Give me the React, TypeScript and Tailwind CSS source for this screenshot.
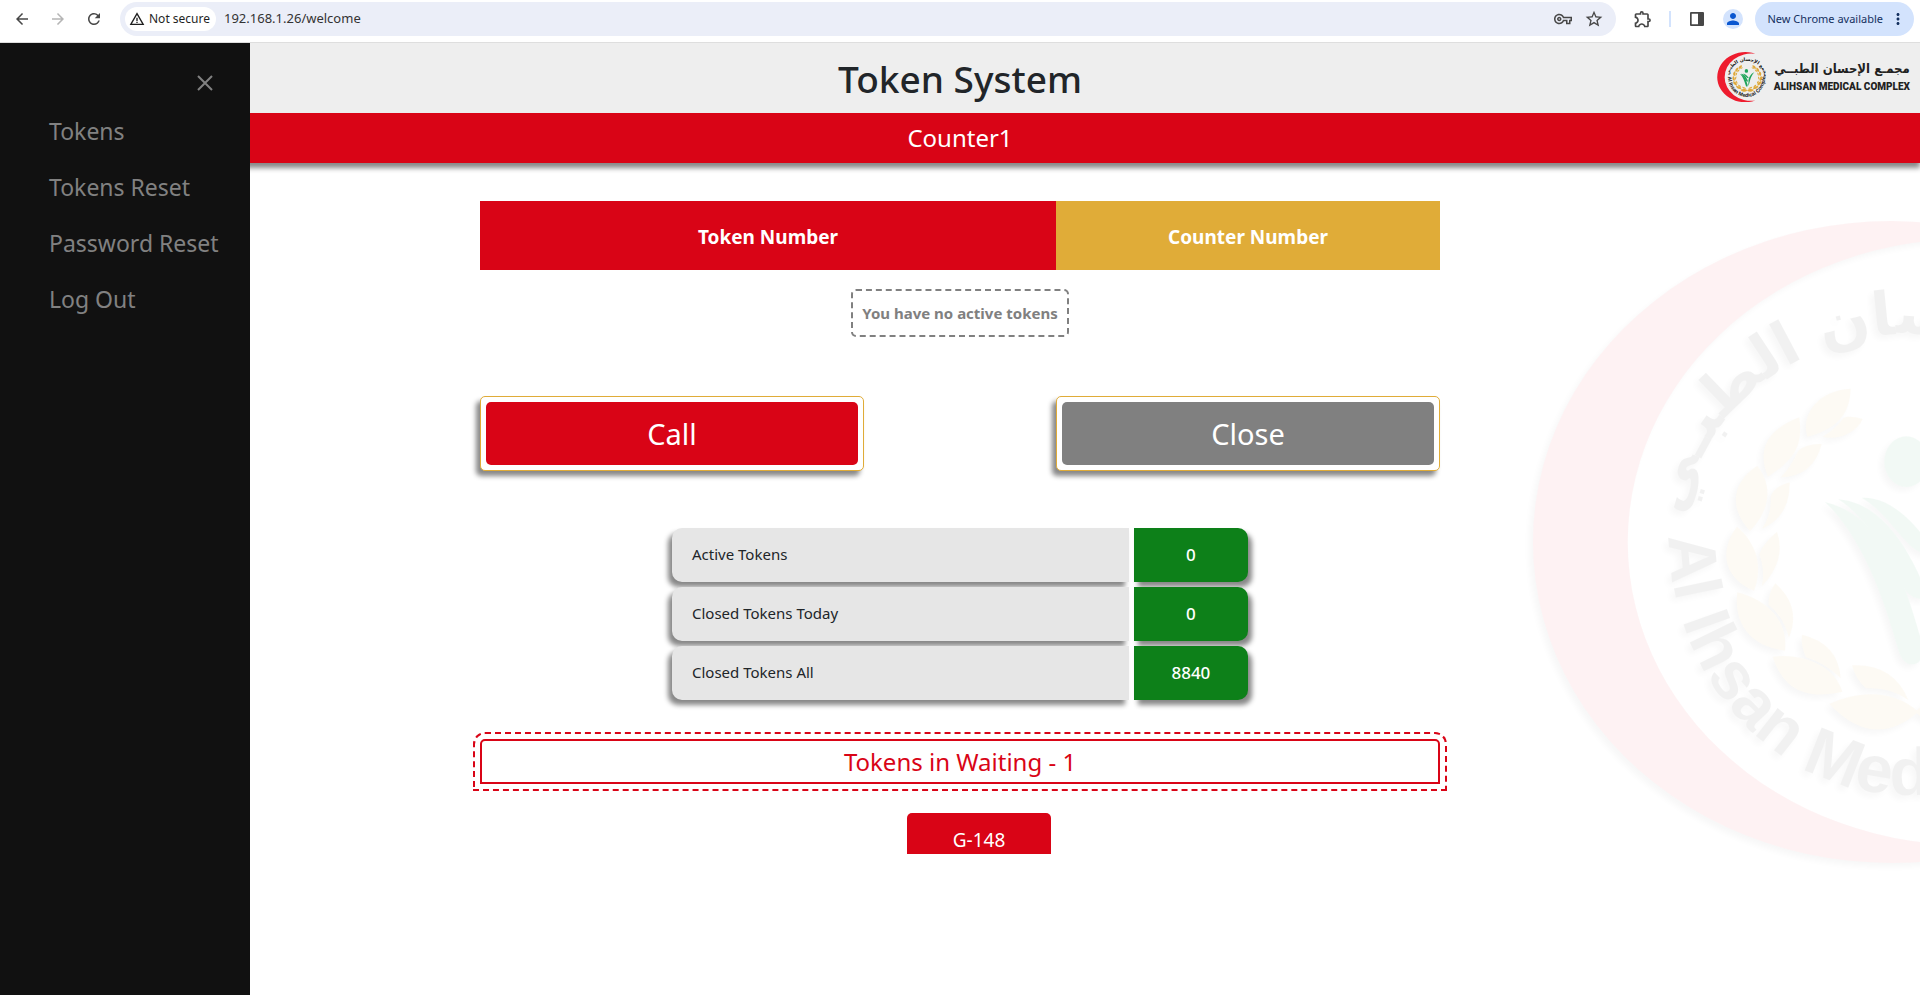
import React from "react";
import {
  MdArrowBack,
  MdArrowForward,
  MdRefresh,
  MdOutlineVpnKey,
  MdStarBorder,
  MdOutlineExtension,
  MdPerson,
  MdMoreVert,
  MdWarningAmber,
} from "react-icons/md";

const leaves = [
  "M1052 566C960 570 900 640 922 710C1000 690 1050 650 1052 566Z",
  "M1088 657C1060 650 1045 648 1030 654C1015 675 1000 690 968 710C1010 722 1070 700 1088 657Z",
  "M898 652C800 690 770 750 804 830C880 780 910 740 898 652Z",
  "M965 732Q920 730 895 752Q870 805 842 832Q940 830 965 732Z",
  "M772 797C690 850 690 930 750 993C810 930 820 860 772 797Z",
  "M869 847Q820 860 812 892Q815 945 786 986Q870 950 869 847Z",
  "M711 980C650 1060 680 1140 762 1172C790 1100 770 1030 711 980Z",
  "M831 995Q790 1030 778 1062Q795 1110 786 1158Q860 1080 831 995Z",
  "M712 1177C700 1270 750 1340 855 1352C865 1260 800 1200 712 1177Z",
  "M826 1150Q804 1180 806 1214Q850 1250 867 1312Q905 1220 826 1150Z",
  "M818 1370C850 1470 920 1500 1027 1475C1000 1390 900 1360 818 1370Z",
  "M906 1304Q902 1340 918 1372Q975 1390 1022 1434Q1015 1330 906 1304Z",
  "M988 1512C1080 1610 1170 1610 1255 1535C1180 1470 1080 1470 988 1512Z",
  "M1056 1396Q1068 1440 1098 1465Q1170 1460 1225 1500Q1180 1390 1056 1396Z",
];

function Wheat() {
  return (
    <g fill="#dfa93a">
      {leaves.map((d) => (
        <path key={d} d={d} />
      ))}
    </g>
  );
}

function Emblem({ id, className }: { id: string; className: string }) {
  return (
    <svg viewBox="0 0 640 644" className={className} aria-hidden="true">
      <defs>
        <path id={`${id}-lower`} d="M139 316A240 259 0 0 0 619 316" />
        <path id={`${id}-upper`} d="M153 320A226 206 0 0 1 605 320" />
      </defs>
      <path
        fill="#ee1c2e"
        d="M490 22.6A358 321 0 1 0 490 621.4A340 303 0 1 1 490 22.6Z"
      />
      <g transform="translate(-30 -20) scale(0.33333)">
        <Wheat />
        <g transform="translate(2500 0) scale(-1 1)">
          <Wheat />
        </g>
        <g fill="#1fa35a">
          <ellipse cx="1219" cy="785" rx="66" ry="76" />
          <path d="M975 906C1085 1010 1150 1190 1195 1350Q1210 1400 1245 1392Q1275 1385 1264 1320C1210 1130 1150 950 975 906Z" />
          <path d="M1015 898C1110 960 1150 1060 1215 1170Q1250 1210 1285 1190C1230 1050 1150 910 1015 898Z" />
          <path d="M1085 893C1150 930 1190 1000 1235 1040Q1270 1070 1310 1060C1240 960 1170 890 1085 893Z" />
          <path d="M1520 840C1380 900 1290 1060 1300 1200Q1290 1330 1285 1370C1370 1230 1340 1050 1520 840Z" />
        </g>
      </g>
      <g fill="#111" fontWeight="700">
        <text fontSize="67" fontFamily="Liberation Sans, Arial, sans-serif">
          <textPath href={`#${id}-lower`}>Al Ihsan Medical Complex</textPath>
        </text>
        <text fontSize="60" fontFamily="DejaVu Sans, sans-serif">
          <textPath href={`#${id}-upper`} startOffset="24">
            مجمع الإحسان الطبـي
          </textPath>
        </text>
      </g>
    </svg>
  );
}

function BrowserBar() {
  return (
    <div className="flex h-[43px] shrink-0 items-start border-b border-[#dedede] bg-white pt-0.5 text-[#474747]">
      <div className="flex h-[34px] w-[120px] items-center gap-[18px] pl-[13px]">
        <button aria-label="Back">
          <MdArrowBack size={18} />
        </button>
        <button aria-label="Forward" className="text-[#b5b5b5]">
          <MdArrowForward size={18} />
        </button>
        <button aria-label="Reload">
          <MdRefresh size={18} />
        </button>
      </div>
      <div className="flex h-[34px] flex-1 items-center rounded-full bg-[#ebeef8] pr-3 pl-[5px]">
        <button className="flex h-6 w-[91px] items-center gap-1 rounded-full bg-white pl-1 text-[12px] whitespace-nowrap text-[#1f1f1f]">
          <MdWarningAmber size={16} />
          Not secure
        </button>
        <input
          aria-label="Address"
          defaultValue="192.168.1.26/welcome"
          className="ml-2 min-w-0 flex-1 bg-transparent text-[13px] text-[#333] outline-none"
        />
        <button aria-label="Saved passwords">
          <MdOutlineVpnKey size={18} />
        </button>
        <button aria-label="Bookmark" className="ml-3">
          <MdStarBorder size={20} />
        </button>
      </div>
      <div className="flex h-[34px] items-center pr-1.5 pl-[17px]">
        <button aria-label="Extensions">
          <MdOutlineExtension size={20} />
        </button>
        <span className="ml-4 h-4 w-0.5 bg-[#d3e3fd]" />
        <button aria-label="Side panel" className="ml-[18px]">
          <svg viewBox="0 0 16 16" className="size-4">
            <path
              fill="currentColor"
              fillRule="evenodd"
              d="M2 1h12a1 1 0 0 1 1 1v12a1 1 0 0 1-1 1H2a1 1 0 0 1-1-1V2a1 1 0 0 1 1-1Zm.7 1.7v10.6H9V2.7Z"
            />
          </svg>
        </button>
        <button
          aria-label="Profile"
          className="ml-[18px] flex size-5 items-center justify-center rounded-full bg-[#d3e3fd] text-[#0b57d0]"
        >
          <MdPerson size={18} />
        </button>
        <button className="ml-3 flex h-[34px] items-center gap-1.5 rounded-full bg-[#d3e3fd] pr-[7px] pl-3 text-[11px] whitespace-nowrap text-[#14305f]">
          New Chrome available
          <MdMoreVert size={18} />
        </button>
      </div>
    </div>
  );
}

const menu = ["Tokens", "Tokens Reset", "Password Reset", "Log Out"];

function Sidebar() {
  return (
    <nav className="absolute inset-y-0 left-0 z-10 w-[250px] bg-[#111] text-[#818181]">
      <div className="flex justify-end pt-5 pr-[25px]">
        <button aria-label="Close menu" className="flex size-10 items-center justify-center">
          <svg viewBox="0 0 16 16" className="size-4" stroke="currentColor" strokeWidth="2">
            <path d="M1 1L15 15M15 1L1 15" />
          </svg>
        </button>
      </div>
      <ul>
        {menu.map((m) => (
          <li key={m}>
            <a href="#" className="flex h-14 items-center pl-[49px] text-[23px] whitespace-nowrap">
              {m}
            </a>
          </li>
        ))}
      </ul>
    </nav>
  );
}

const stats = [
  { label: "Active Tokens", value: "0" },
  { label: "Closed Tokens Today", value: "0" },
  { label: "Closed Tokens All", value: "8840" },
];

export default function App() {
  return (
    <div className="flex min-h-screen flex-col bg-white font-['Noto_Sans',sans-serif] text-[#212529]">
      <BrowserBar />
      <div className="relative flex-1 overflow-hidden">
        <Sidebar />
        <div className="pointer-events-none absolute top-[177px] -right-[250px] opacity-5">
          <Emblem id="mark" className="w-[640px] drop-shadow-[-4px_4px_3px_rgba(0,0,0,0.6)]" />
        </div>
        <header>
          <div className="grid h-[70px] grid-cols-[1fr_auto_1fr] items-center bg-[#eee]">
            <h1 className="col-start-2 pt-0.5 text-[37px] font-medium">Token System</h1>
            <div className="flex items-center justify-end gap-[7px] pr-2.5 pb-0.5">
              <Emblem id="logo" className="w-[50px]" />
              <div className="flex flex-col items-center whitespace-nowrap text-[#222]">
                <span dir="rtl" className="font-['DejaVu_Sans_Condensed','DejaVu_Sans',sans-serif] text-[13px] leading-5 font-bold">
                  مجمـع الإحسان الطبــي
                </span>
                <span className="font-['Roboto',sans-serif] text-[10px] leading-4 font-black">
                  ALIHSAN MEDICAL COMPLEX
                </span>
              </div>
            </div>
          </div>
          <div className="flex h-[50px] items-center justify-center bg-[#d90416] text-[24px] text-white shadow-[0_5px_5px_#888]">
            Counter1
          </div>
        </header>
        <main className="relative mx-auto w-1/2 pt-[38px]">
          <table className="h-[69px] w-full table-fixed text-[19px] text-white">
            <thead>
              <tr>
                <th className="w-3/5 bg-[#d90416] pt-1">Token Number</th>
                <th className="bg-[#e0ac38] pt-1">Counter Number</th>
              </tr>
            </thead>
          </table>
          <p className="mx-auto mt-[19px] flex h-12 w-fit items-center rounded-[5px] border-2 border-dashed border-[#808080] px-[9px] text-[15px] font-bold text-[#808080]">
            You have no active tokens
          </p>
          <div className="mt-[59px] flex justify-between text-[29px] text-white">
            <div className="w-2/5 rounded-[5px] border border-[#e0ac38] bg-white p-[5px] shadow-[-4px_5px_5px_#888]">
              <button className="h-[63px] w-full rounded-[5px] bg-[#d90416]">Call</button>
            </div>
            <div className="w-2/5 rounded-[5px] border border-[#e0ac38] bg-white p-[5px] shadow-[-4px_5px_5px_#888]">
              <button className="h-[63px] w-full rounded-[5px] bg-[#808080]">Close</button>
            </div>
          </div>
          <dl className="mx-auto mt-[57px] flex w-3/5 flex-col gap-[5px]">
            {stats.map((s) => (
              <div key={s.label} className="grid h-[54px] grid-cols-[4fr_1fr] gap-[5px]">
                <dt className="flex items-center rounded-l-[10px] bg-[#e6e6e6] pb-0.5 pl-5 text-[15px] shadow-[-4px_5px_5px_#888]">
                  {s.label}
                </dt>
                <dd className="flex items-center justify-center rounded-r-[10px] bg-[#0d8019] text-[17px] font-medium text-white shadow-[4px_5px_5px_#888]">
                  {s.value}
                </dd>
              </div>
            ))}
          </dl>
          <h2 className="mt-[39px] flex h-[45px] items-center justify-center rounded-t-[5px] border-2 border-[#d90416] bg-white text-[24px] text-[#d90416] outline-2 outline-offset-5 outline-[#d90416] outline-dashed">
            Tokens in Waiting - 1
          </h2>
          <div className="mt-[29px] flex h-[41px] justify-center overflow-hidden pl-[38px]">
            <div className="flex h-[54px] w-[144px] items-center justify-center rounded-[5px] bg-[#d90416] text-[19px] text-white">
              G-148
            </div>
          </div>
        </main>
      </div>
    </div>
  );
}
